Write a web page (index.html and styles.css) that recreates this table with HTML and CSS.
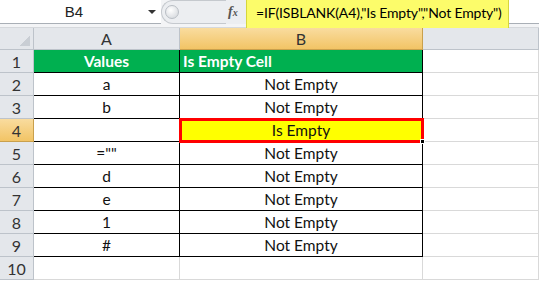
FILE: index.html
```html
<!DOCTYPE html>
<html lang="en">

<head>
    <meta charset="UTF-8">
    <meta name="viewport" content="width=device-width, initial-scale=1.0">
    <title>ISBLANK example</title>
    <link rel="stylesheet" href="styles.css">
</head>

<body>
    <div class="bar">
        <div class="namebox">
            <span class="ref">B4</span>
            <span class="caret"></span>
        </div>
        <div class="splitter"><span class="knob"></span></div>
        <div class="fx">f<sub>x</sub></div>
        <div class="formula">
            <span class="hl">=IF(ISBLANK(A4),"Is Empty","Not Empty")</span>
        </div>
    </div>

    <div class="sheet">
        <div class="corner"></div>
        <div class="colhead">A</div>
        <div class="colhead active">B</div>
        <div class="colhead"></div>

        <div class="rowhead">1</div>
        <div class="cell head center">Values</div>
        <div class="cell head">Is Empty Cell</div>
        <div class="blank"></div>

        <div class="rowhead">2</div>
        <div class="cell center">a</div>
        <div class="cell center">Not Empty</div>
        <div class="blank"></div>

        <div class="rowhead">3</div>
        <div class="cell center">b</div>
        <div class="cell center">Not Empty</div>
        <div class="blank"></div>

        <div class="rowhead active">4</div>
        <div class="cell center"></div>
        <div class="cell center selected">Is Empty<span class="handle"></span></div>
        <div class="blank"></div>

        <div class="rowhead">5</div>
        <div class="cell center">=""</div>
        <div class="cell center">Not Empty</div>
        <div class="blank"></div>

        <div class="rowhead">6</div>
        <div class="cell center">d</div>
        <div class="cell center">Not Empty</div>
        <div class="blank"></div>

        <div class="rowhead">7</div>
        <div class="cell center">e</div>
        <div class="cell center">Not Empty</div>
        <div class="blank"></div>

        <div class="rowhead">8</div>
        <div class="cell center">1</div>
        <div class="cell center">Not Empty</div>
        <div class="blank"></div>

        <div class="rowhead">9</div>
        <div class="cell center">#</div>
        <div class="cell center">Not Empty</div>
        <div class="blank"></div>

        <div class="rowhead">10</div>
        <div class="blank"></div>
        <div class="blank"></div>
        <div class="blank"></div>
    </div>
</body>

</html>
```

FILE: styles.css
```css
* {
    box-sizing: border-box;
    margin: 0;
}

body {
    background-color: #fff;
    font-family: Lato, sans-serif;
    width: 539px;
    height: 283px;
    overflow: hidden;
}

/* formula bar */

.bar {
    display: flex;
    height: 28px;
    background-color: #f3f4f6;
    border-bottom: 1px solid #d5d8dc;
}

.namebox {
    display: flex;
    align-items: center;
    width: 161px;
    height: 24px;
    background-color: #fff;
    border-bottom: 1px solid #a9afb6;
}

.namebox .ref {
    flex: 1;
    text-align: center;
    font-family: 'Liberation Sans', sans-serif;
    font-size: 15px;
    color: #222;
}

.namebox .caret {
    width: 0;
    height: 0;
    margin-right: 5px;
    border-left: 4px solid transparent;
    border-right: 4px solid transparent;
    border-top: 4px solid #333;
}

.splitter {
    display: flex;
    align-items: center;
    width: 65px;
    height: 24px;
    background-color: #eceef1;
    border-radius: 12px 0 0 12px;
    border: 1px solid #c5c9ce;
    border-right: 0;
    padding-left: 3px;
}

.knob {
    width: 14px;
    height: 14px;
    border-radius: 50%;
    background: radial-gradient(circle at 40% 35%, #fff, #cfd3d8);
    border: 1px solid #b9bec4;
}

.fx {
    width: 20px;
    height: 24px;
    line-height: 24px;
    padding-left: 2px;
    background-color: #eceef1;
    font-family: 'Liberation Serif', serif;
    font-style: italic;
    font-weight: bold;
    font-size: 14px;
    color: #555;
}

.fx sub {
    font-size: 10px;
    vertical-align: 0;
}

.formula {
    flex: 1;
    height: 24px;
    background-color: #fff;
    border-bottom: 1px solid #a9afb6;
}

.formula .hl {
    display: inline-block;
    height: 29px;
    padding: 4px 6px 0 9px;
    background-color: #fcfc6a;
    border: 1px solid #d6d63c;
    border-top: 0;
    font-size: 14px;
    letter-spacing: -0.15px;
    color: #000;
    white-space: nowrap;
}

/* worksheet */

.sheet {
    display: grid;
    grid-template-columns: 34px 146px 243px 1fr;
    grid-template-rows: 22px repeat(10, 23px);
}

.corner,
.colhead,
.rowhead {
    background-color: #e4e7eb;
    border-right: 1px solid #bdc3ca;
    border-bottom: 1px solid #bdc3ca;
    color: #333;
    font-size: 16px;
    display: flex;
    align-items: center;
    justify-content: center;
}

.corner {
    background: linear-gradient(135deg, #e4e7eb 62%, #c9ced4 63%);
    background-size: 14px 14px;
    background-position: right 3px bottom 3px;
    background-repeat: no-repeat;
    background-color: #e4e7eb;
}

.colhead.active,
.rowhead.active {
    background: linear-gradient(#f9dc9f, #f2c465);
    border-color: #c9a04c;
}

.cell {
    display: flex;
    align-items: center;
    padding: 0 3px;
    border-right: 1px solid #000;
    border-bottom: 1px solid #000;
    font-size: 15.5px;
    color: #111;
    white-space: nowrap;
}

.cell.center {
    justify-content: center;
}

.cell.head {
    background-color: #00b050;
    color: #fff;
    font-weight: bold;
}

.cell.selected {
    position: relative;
    background-color: #ffff00;
    outline: 3px solid #ff0000;
    outline-offset: -2px;
}

.handle {
    position: absolute;
    right: -3px;
    bottom: -3px;
    width: 5px;
    height: 5px;
    background-color: #000;
    border: 1px solid #fff;
}

.blank {
    border-right: 1px solid #d9d9d9;
    border-bottom: 1px solid #d9d9d9;
}
```
